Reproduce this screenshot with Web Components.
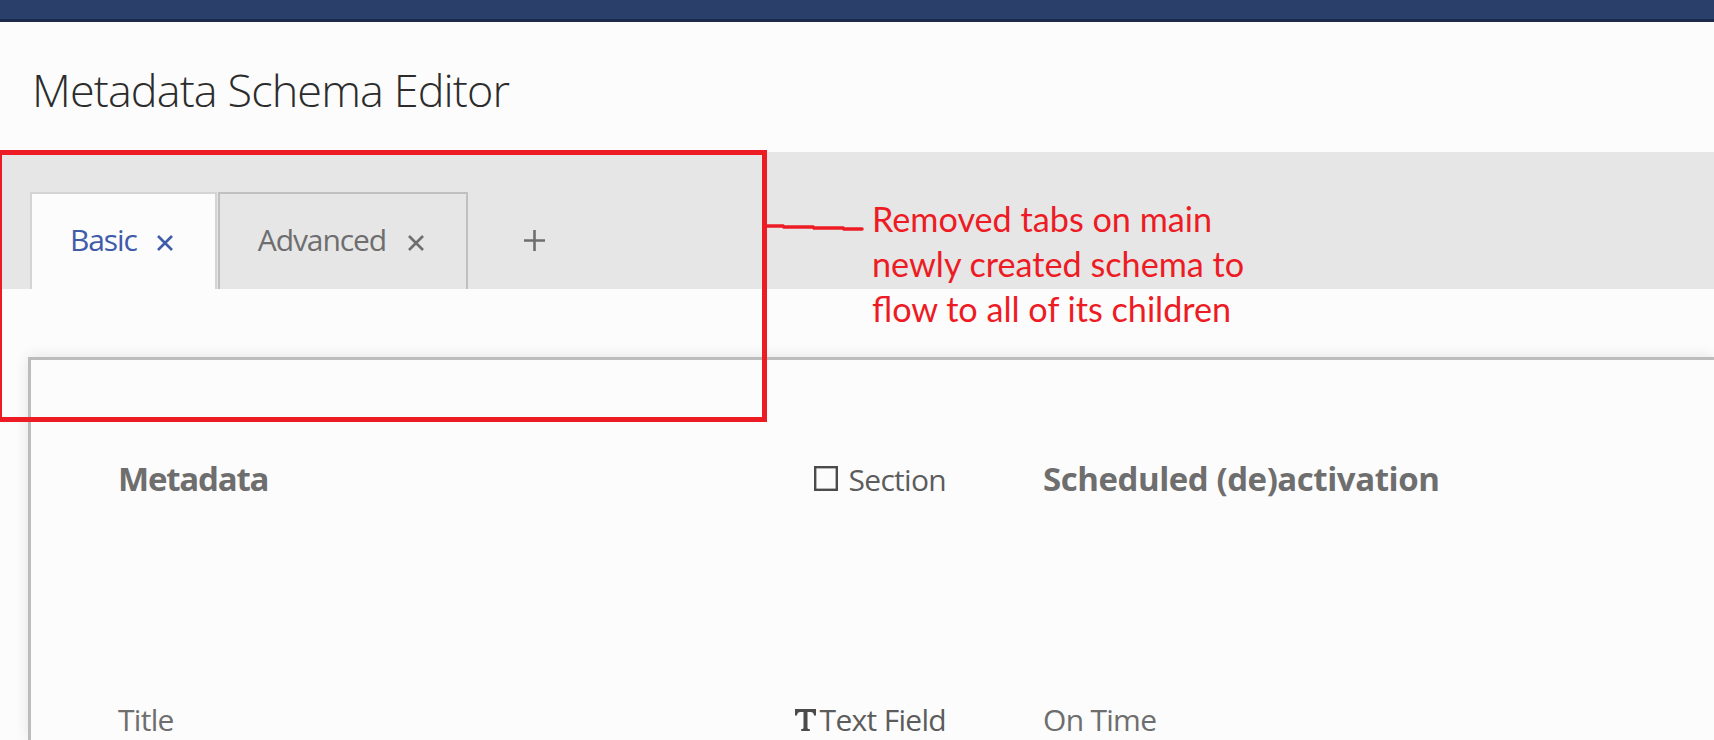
<!DOCTYPE html>
<html lang="en">
<head>
<meta charset="utf-8">
<title>Metadata Schema Editor</title>
<style>
    html, body { margin: 0; height: 740px; overflow: hidden; background: #fcfcfc; }
    body { font-family: "Open Sans", "Liberation Sans", sans-serif; position: relative; }
</style>
</head>
<body>
<top-bar></top-bar>
<page-title>Metadata Schema Editor</page-title>
<tab-band>
    <schema-tab active closable>Basic</schema-tab>
    <schema-tab closable>Advanced</schema-tab>
    <add-tab></add-tab>
</tab-band>
<schema-card>
    <schema-row heading>
        <span slot="label" style="letter-spacing:-1.2px">Metadata</span>
        <span slot="type"><field-icon kind="section"></field-icon>Section</span>
        <span slot="aside" style="letter-spacing:-0.45px">Scheduled (de)activation</span>
    </schema-row>
    <schema-row>
        <span slot="label">Title</span>
        <span slot="type"><field-icon kind="text"></field-icon>Text Field</span>
        <span slot="aside">On Time</span>
    </schema-row>
</schema-card>
<review-note>Removed tabs on main<br>newly created schema to<br>flow to all of its children</review-note>

<script>
class TopBar extends HTMLElement {
    constructor() {
        super();
        this.attachShadow({ mode: "open" }).innerHTML = `
        <style>
            :host { display: block; height: 19px; background: #2b3f6b; border-bottom: 3px solid #1c2a4a; }
        </style>`;
    }
}
customElements.define("top-bar", TopBar);

class PageTitle extends HTMLElement {
    constructor() {
        super();
        this.attachShadow({ mode: "open" }).innerHTML = `
        <style>
            :host {
                display: flex;
                align-items: center;
                height: 130px;
                padding: 4px 0 0 32px;
                box-sizing: border-box;
                font-family: "Open Sans", sans-serif;
                font-weight: 300;
                font-size: 45px;
                letter-spacing: -0.9px;
                color: #2c2c2c;
            }
        </style>
        <slot></slot>`;
    }
}
customElements.define("page-title", PageTitle);

class TabBand extends HTMLElement {
    constructor() {
        super();
        this.attachShadow({ mode: "open" }).innerHTML = `
        <style>
            :host {
                display: flex;
                align-items: flex-end;
                height: 137px;
                padding-left: 30px;
                box-sizing: border-box;
                background: #e6e6e6;
            }
        </style>
        <slot></slot>`;
    }
}
customElements.define("tab-band", TabBand);

class SchemaTab extends HTMLElement {
    constructor() {
        super();
        this.attachShadow({ mode: "open" }).innerHTML = `
        <style>
            :host {
                display: flex;
                align-items: center;
                gap: 21px;
                height: 97px;
                padding: 0 41px 4px 38px;
                box-sizing: border-box;
                border: 2px solid #c0c0c0;
                border-bottom: 0;
                font-family: "Open Sans", sans-serif;
                font-size: 30px;
                letter-spacing: -1.1px;
                color: #6e6e6e;
                background: #e6e6e6;
            }
            :host([active]) {
                background: #fcfcfc;
                color: #3f5ba9;
                gap: 19px;
                padding: 0 41px 4px 38px;
                border-color: #d4d4d4;
                margin-right: 1px;
            }
            svg { width: 18px; height: 18px; flex: none; margin-top: 6px; }
        </style>
        <slot></slot>
        <svg viewBox="0 0 18 18" fill="none" stroke="currentColor" stroke-width="2.6"><path d="M2 2 16 16M16 2 2 16"/></svg>`;
    }
}
customElements.define("schema-tab", SchemaTab);

class AddTab extends HTMLElement {
    constructor() {
        super();
        this.attachShadow({ mode: "open" }).innerHTML = `
        <style>
            :host { display: flex; align-items: center; height: 97px; margin-left: 56px; padding-bottom: 4px; box-sizing: border-box; color: #6e6e6e; }
            svg { width: 21px; height: 21px; margin-top: 3px; }
        </style>
        <svg viewBox="0 0 21 21" fill="none" stroke="currentColor" stroke-width="2.6"><path d="M10.5 0V21M0 10.5H21"/></svg>`;
    }
}
customElements.define("add-tab", AddTab);

class SchemaCard extends HTMLElement {
    constructor() {
        super();
        this.attachShadow({ mode: "open" }).innerHTML = `
        <style>
            :host {
                display: flex;
                flex-direction: column;
                gap: 203px;
                margin: 68px 0 0 28px;
                padding: 96px 0 0 87px;
                height: 383px;
                box-sizing: border-box;
                border: 3px solid #bcbcbc;
                border-width: 3px 0 0 3px;
                box-shadow: 0 0 14px rgba(0, 0, 0, 0.10);
                background: #fcfcfc;
            }
        </style>
        <slot></slot>`;
    }
}
customElements.define("schema-card", SchemaCard);

class SchemaRow extends HTMLElement {
    constructor() {
        super();
        this.attachShadow({ mode: "open" }).innerHTML = `
        <style>
            :host {
                display: flex;
                align-items: baseline;
                height: 40px;
                font-family: "Open Sans", sans-serif;
                font-size: 30px;
                letter-spacing: -0.7px;
                color: #6e6e6e;
            }
            .label { width: 676px; }
            .type {
                width: 152px;
                display: flex;
                justify-content: flex-end;
                align-items: baseline;
                white-space: nowrap;
                color: #5c5c5c;
            }
            .aside { margin-left: 97px; white-space: nowrap; }
            :host([heading]) .label, :host([heading]) .aside {
                font-size: 33px;
                font-weight: 700;
            }
        </style>
        <div class="label"><slot name="label"></slot></div>
        <div class="type"><slot name="type"></slot></div>
        <div class="aside"><slot name="aside"></slot></div>`;
    }
}
customElements.define("schema-row", SchemaRow);

class FieldIcon extends HTMLElement {
    constructor() {
        super();
        const text = this.getAttribute("kind") === "text";
        this.attachShadow({ mode: "open" }).innerHTML = `
        <style>
            :host { display: inline-block; vertical-align: baseline; margin-right: ${text ? 4 : 11}px; color: #4b4b4b; }
            svg { display: block; width: ${text ? 21 : 24}px; height: ${text ? 22 : 25}px; }
        </style>
        ${text
            ? `<svg viewBox="0 0 21 22" fill="currentColor"><path d="M0 0H21V6.500H19C18.700 4.200 18 3 15.500 3H12.500V18.500C12.500 19.500 13 20 14.800 20V22H6.200V20C8 20 8.500 19.500 8.500 18.500V3H5.500C3 3 2.300 4.200 2 6.500H0Z"/></svg>`
            : `<svg viewBox="0 0 24 25" fill="none" stroke="currentColor" stroke-width="2.4"><rect x="1.200" y="1.200" width="21.600" height="22.600"/></svg>`}`;
    }
}
customElements.define("field-icon", FieldIcon);

class ReviewNote extends HTMLElement {
    constructor() {
        super();
        this.attachShadow({ mode: "open" }).innerHTML = `
        <style>
            :host { position: absolute; left: 0; top: 0; width: 1714px; height: 740px; pointer-events: none; display: block; overflow: hidden; }
            .box {
                position: absolute;
                left: -3px;
                top: 150px;
                width: 760px;
                height: 262px;
                border: 5px solid #ed1c24;
            }
            svg { position: absolute; left: 765px; top: 220px; width: 100px; height: 14px; }
            .text {
                position: absolute;
                left: 872px;
                top: 196px;
                font-family: Lato, sans-serif;
                font-size: 34.2px;
                line-height: 45px;
                color: #ed1c24;
                white-space: nowrap;
            }
        </style>
        <div class="box"></div>
        <svg viewBox="0 0 100 14" fill="none" stroke="#ed1c24" stroke-width="3.500" stroke-linecap="round"><path d="M0 6H18L19 7H48L49 8H78L79 9H97"/></svg>
        <div class="text"><slot></slot></div>`;
    }
}
customElements.define("review-note", ReviewNote);
</script>
</body>
</html>
